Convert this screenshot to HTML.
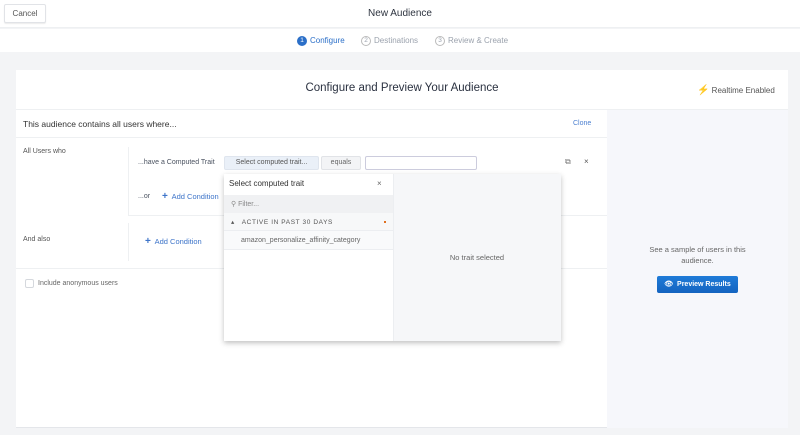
<!DOCTYPE html>
<html><head><style>
*{box-sizing:border-box;margin:0;padding:0}
body{width:800px;height:435px;overflow:hidden;background:#f3f4f6;font-family:"Liberation Sans",sans-serif;position:relative;color:#4a5260}
.a{position:absolute}
.t{font-size:8px;white-space:nowrap}
.c{display:inline-flex;align-items:center;justify-content:center;width:10px;height:10px;border-radius:50%;font-size:6.5px;vertical-align:middle;margin-right:3px}
</style></head><body>
<div class="a" style="left:0;top:0;width:800px;height:28px;background:#fff;border-bottom:1px solid #eef0f2"></div>
<div class="a t" style="left:4px;top:4px;width:42px;height:19px;border:1px solid #e1e3e7;border-radius:2px;background:#fff;box-shadow:0 1px 1px rgba(0,0,0,.08);text-align:center;line-height:17px;color:#555">Cancel</div>
<div class="a" style="left:0;top:8px;width:800px;text-align:center;font-size:10px;color:#2e3440">New Audience</div>
<div class="a" style="left:0;top:29px;width:800px;height:23px;background:#fff"></div>
<div class="a t" style="left:297px;top:35px;color:#2b6fc8;line-height:11px"><span class="c" style="background:#2b6fc8;color:#fff">1</span>Configure</div>
<div class="a t" style="left:361px;top:35px;color:#9ba2ad;line-height:11px"><span class="c" style="border:1px solid #bbb">2</span>Destinations</div>
<div class="a t" style="left:435px;top:35px;color:#9ba2ad;line-height:11px"><span class="c" style="border:1px solid #bbb">3</span>Review &amp; Create</div>

<div class="a" style="left:16px;top:70px;width:772px;height:358px;background:#fff;border-bottom:1px solid #e4e6ea"></div>
<div class="a" style="left:16px;top:82px;width:772px;text-align:center;font-size:11.5px;color:#2a3140">Configure and Preview Your Audience</div>
<div class="a t" style="left:697px;top:85px;color:#555"><span style="color:#f5a623;font-size:10px">⚡</span> Realtime Enabled</div>
<div class="a" style="left:16px;top:109px;width:772px;height:1px;background:#eef0f2"></div>
<div class="a" style="left:607px;top:110px;width:181px;height:318px;background:#f6f7fb"></div>
<div class="a" style="left:16px;top:137px;width:591px;height:1px;background:#eef0f2"></div>
<div class="a" style="left:23px;top:119px;font-size:8.5px;color:#333">This audience contains all users where...</div>
<div class="a t" style="left:573px;top:120px;color:#4b7fd0;font-size:7px">Clone</div>

<div class="a t" style="left:23px;top:148px;font-size:7px;color:#555">All Users who</div>
<div class="a" style="left:128px;top:147px;width:479px;height:69px;border:1px solid #eef0f2;border-right:none;border-top:none"></div>
<div class="a t" style="left:138px;top:159px;font-size:7px">...have a Computed Trait</div>
<div class="a t" style="left:224px;top:156px;width:95px;height:14px;background:#eaf0f8;border:1px solid #dfe5ee;border-radius:2px;line-height:12px;text-align:center;font-size:7px;color:#555">Select computed trait...</div>
<div class="a t" style="left:321px;top:156px;width:40px;height:14px;background:#f3f4f6;border:1px solid #e1e3e7;border-radius:2px;line-height:12px;text-align:center;font-size:7px;color:#666">equals</div>
<div class="a" style="left:365px;top:156px;width:112px;height:14px;border:1px solid #ccd;border-radius:2px;background:#fff"></div>
<div class="a t" style="left:565px;top:157px;color:#777;font-size:8px">⧉</div>
<div class="a t" style="left:584px;top:157px;color:#555;font-size:8px">×</div>
<div class="a t" style="left:138px;top:193px;font-size:7px">...or</div>
<div class="a t" style="left:162px;top:191px;font-size:7.5px;color:#3d74c9"><b style="font-size:10px">+</b>&nbsp; Add Condition</div>

<div class="a t" style="left:23px;top:236px;font-size:7px;color:#555">And also</div>
<div class="a" style="left:128px;top:223px;width:1px;height:38px;background:#eef0f2"></div>
<div class="a t" style="left:145px;top:236px;font-size:7.5px;color:#3d74c9"><b style="font-size:10px">+</b>&nbsp; Add Condition</div>
<div class="a" style="left:16px;top:268px;width:591px;height:1px;background:#eef0f2"></div>
<div class="a" style="left:25px;top:279px;width:9px;height:9px;border:1px solid #d5d8dd;border-radius:2px"></div>
<div class="a t" style="left:38px;top:280px;font-size:7px;color:#666">Include anonymous users</div>

<div class="a" style="left:607px;top:244px;width:181px;text-align:center;font-size:7.5px;color:#666;line-height:11px">See a sample of users in this<br>audience.</div>
<div class="a t" style="left:657px;top:276px;width:81px;height:17px;background:linear-gradient(#1f7bd8,#1464c0);border-radius:2px;color:#fff;font-size:7px;font-weight:bold;line-height:17px;text-align:center">👁︎&nbsp; Preview Results</div>

<div class="a" style="left:224px;top:174px;width:337px;height:167px;background:#fff;box-shadow:0 2px 5px rgba(0,0,0,.25)"></div>
<div class="a" style="left:393px;top:174px;width:168px;height:167px;background:#f6f7f9;border-left:1px solid #eceef1"></div>
<div class="a t" style="left:229px;top:179px;font-size:8px;color:#333">Select computed trait</div>
<div class="a t" style="left:377px;top:179px;font-size:8px;color:#666">×</div>
<div class="a" style="left:224px;top:195px;width:169px;height:18px;background:#f0f1f3"></div>
<div class="a t" style="left:231px;top:200px;font-size:7px;color:#888">⚲ Filter...</div>
<div class="a" style="left:224px;top:213px;width:169px;height:18px;background:#f7f8f9;border-bottom:1px solid #eceef1"></div>
<div class="a t" style="left:231px;top:218px;font-size:6.5px;color:#555;letter-spacing:.6px">▴&nbsp;&nbsp; ACTIVE IN PAST 30 DAYS</div>
<div class="a" style="left:384px;top:221px;width:2px;height:2px;background:#e07020"></div>
<div class="a" style="left:224px;top:231px;width:169px;height:19px;background:#f9fafb;border-bottom:1px solid #eceef1"></div>
<div class="a t" style="left:241px;top:237px;font-size:7px;color:#666">amazon_personalize_affinity_category</div>
<div class="a t" style="left:393px;top:253px;width:168px;text-align:center;font-size:7.5px;color:#666">No trait selected</div>
</body></html>
